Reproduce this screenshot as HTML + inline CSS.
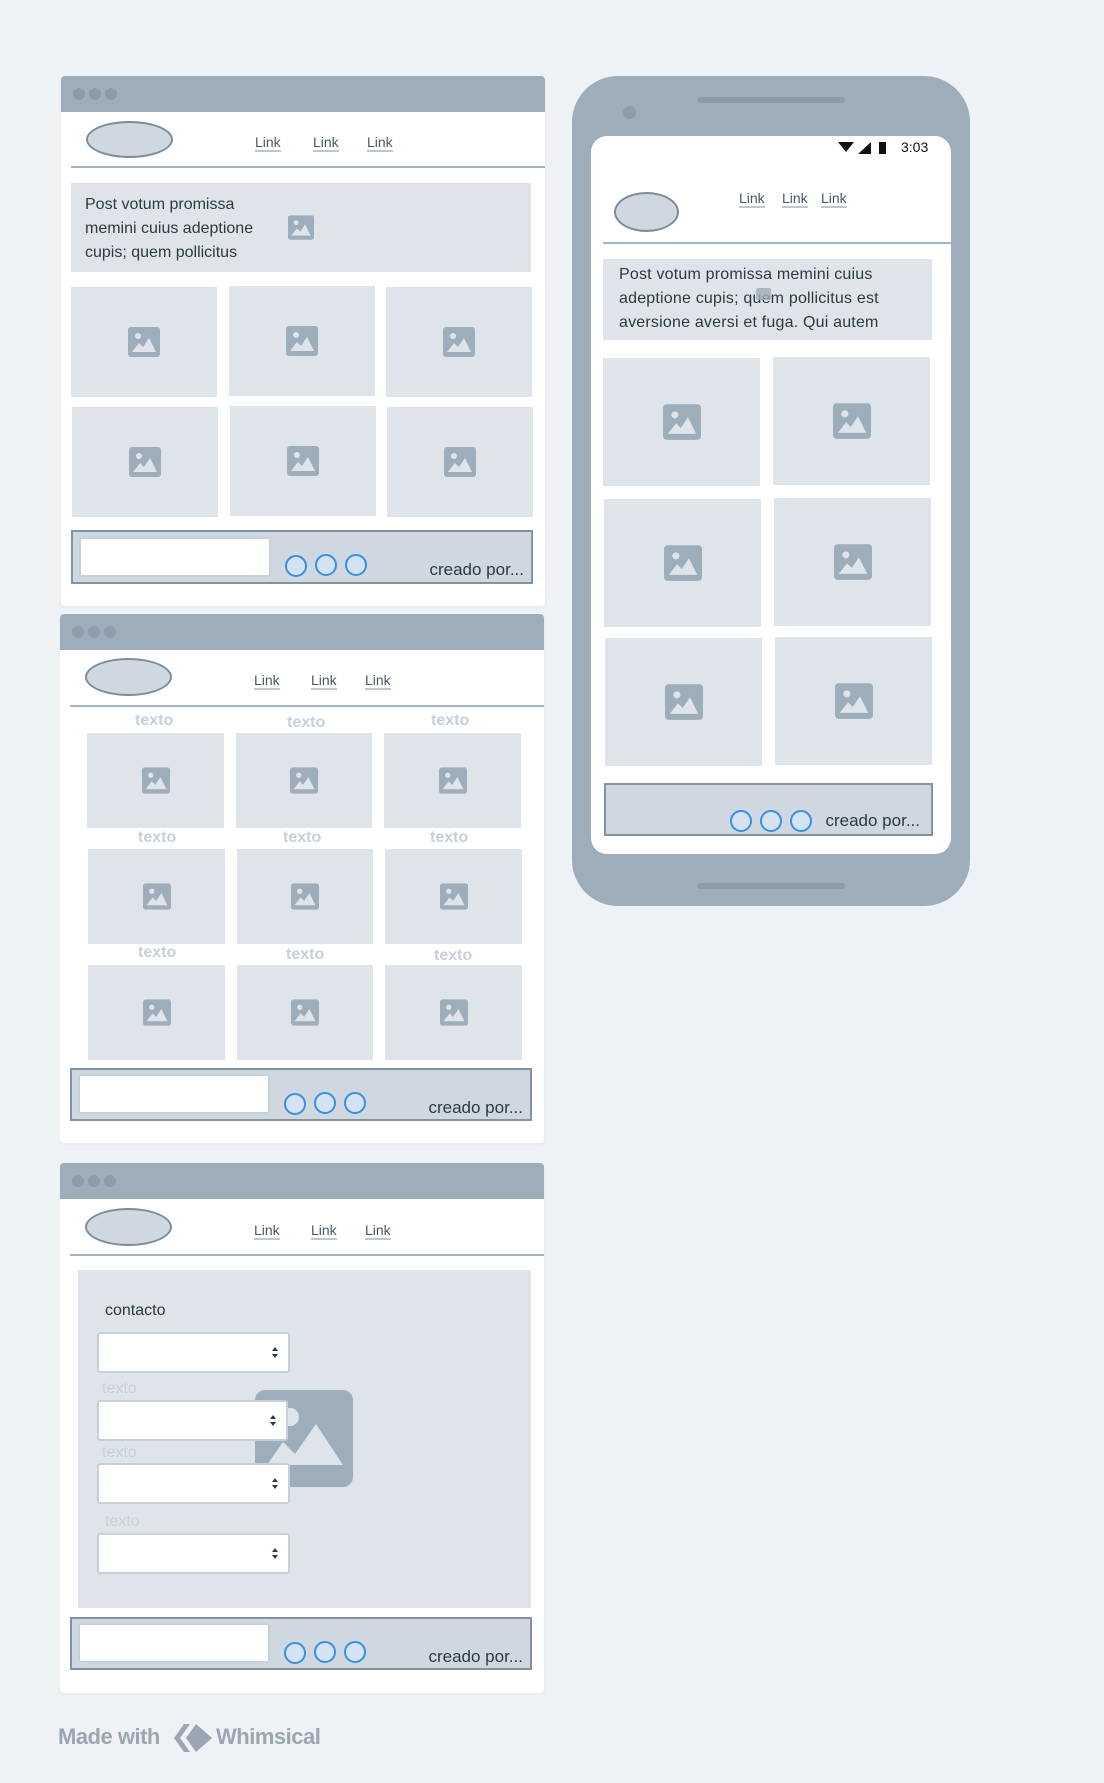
<!DOCTYPE html>
<html><head><meta charset="utf-8"><style>
*{margin:0;padding:0;box-sizing:border-box}
body{width:1104px;height:1783px;background:#eff2f5;position:relative;overflow:hidden;font-family:"Liberation Sans","DejaVu Sans",sans-serif;color:#2c3945}
.a{position:absolute}
.win{position:absolute;background:#fff;border-radius:4px;overflow:hidden;box-shadow:0 1px 3px rgba(0,0,0,.05)}
.tb{position:absolute;left:0;top:0;right:0;height:36px;background:#9eadba}
.dot{position:absolute;top:12px;width:12px;height:12px;border-radius:50%;background:#8d9cab}
.logo{position:absolute;border:2px solid #7d8c9a;background:#cfd8e0;border-radius:50%}
.lk{position:absolute;font-size:14px;color:#4a5866;border-bottom:2px solid #bcc7d2;line-height:16px}
.hl{position:absolute;height:2px;background:#a6b3c0}
.cell{position:absolute;background:#dfe4eb;display:flex;align-items:center;justify-content:center}
.ft{position:absolute;background:#cfd8e0;border:2px solid #8593a1}
.inp{position:absolute;background:#fff;border:2px solid #c6d0d9;border-radius:3px}
.c{position:absolute;width:22px;height:22px;border-radius:50%;border:2px solid #3b8fe0;background:#d3e3f4}
.cp{position:absolute;font-size:17px;color:#2c3945;white-space:nowrap}
.tx{position:absolute;font-size:16px;font-weight:bold;color:#c6d0da}
.sel{position:absolute;width:193px;height:41px;background:#fff;border:2px solid #c6d0d9;border-radius:3px}
.sel:after{content:"";position:absolute;right:10px;top:13px;width:0;height:0;border-left:3px solid transparent;border-right:3px solid transparent;border-bottom:4px solid #2c3945}
.sel:before{content:"";position:absolute;right:10px;top:20px;width:0;height:0;border-left:3px solid transparent;border-right:3px solid transparent;border-top:4px solid #2c3945}
</style></head><body>
<svg width="0" height="0" style="position:absolute"><defs>
<symbol id="im" viewBox="0 0 32 30"><rect width="32" height="30" rx="3" fill="#9eadba"/><circle cx="10" cy="9" r="3" fill="#dfe4eb"/><path d="M4 25 L11 16 L15 20 L21 11 L28 25Z" fill="#dfe4eb"/></symbol>
</defs></svg>

<!-- WINDOW 1 -->
<div class="win" style="left:61px;top:76px;width:484px;height:530px">
<div class="tb"><div class="dot" style="left:12px"></div><div class="dot" style="left:28px"></div><div class="dot" style="left:44px"></div></div>
</div>
<div class="logo" style="left:86px;top:121px;width:87px;height:37px"></div>
<div class="lk" style="left:255px;top:134px">Link</div>
<div class="lk" style="left:313px;top:134px">Link</div>
<div class="lk" style="left:367px;top:134px">Link</div>
<div class="hl" style="left:71px;top:166px;width:474px"></div>
<div class="cell" style="left:71px;top:183px;width:460px;height:89px;display:block">
<div class="a" style="left:14px;top:10px;font-size:16px;line-height:24px;color:#2c3945">Post votum promissa<br>memini cuius adeptione<br>cupis; quem pollicitus</div>
<svg class="a" style="left:217px;top:32px" width="26" height="25"><use href="#im"/></svg></div>
<div class="cell" style="left:71px;top:287px;width:146px;height:110px"><svg width="32" height="30"><use href="#im"/></svg></div>
<div class="cell" style="left:229px;top:286px;width:146px;height:110px"><svg width="32" height="30"><use href="#im"/></svg></div>
<div class="cell" style="left:386px;top:287px;width:146px;height:110px"><svg width="32" height="30"><use href="#im"/></svg></div>
<div class="cell" style="left:72px;top:407px;width:146px;height:110px"><svg width="32" height="30"><use href="#im"/></svg></div>
<div class="cell" style="left:230px;top:406px;width:146px;height:110px"><svg width="32" height="30"><use href="#im"/></svg></div>
<div class="cell" style="left:387px;top:407px;width:146px;height:110px"><svg width="32" height="30"><use href="#im"/></svg></div>
<div class="ft" style="left:71px;top:530px;width:462px;height:54px"></div>
<div class="inp" style="left:79px;top:537px;width:192px;height:40px"></div>
<div class="c" style="left:285px;top:555px"></div><div class="c" style="left:315px;top:554px"></div><div class="c" style="left:345px;top:554px"></div>
<div class="cp" style="right:580px;top:560px">creado por...</div>

<!-- WINDOW 2 -->
<div class="win" style="left:60px;top:614px;width:484px;height:529px">
<div class="tb"><div class="dot" style="left:12px"></div><div class="dot" style="left:28px"></div><div class="dot" style="left:44px"></div></div>
</div>
<div class="logo" style="left:85px;top:658px;width:87px;height:38px"></div>
<div class="lk" style="left:254px;top:672px">Link</div>
<div class="lk" style="left:311px;top:672px">Link</div>
<div class="lk" style="left:365px;top:672px">Link</div>
<div class="hl" style="left:70px;top:705px;width:474px"></div>
<div class="tx" style="left:135px;top:712px">texto</div><div class="tx" style="left:287px;top:714px">texto</div><div class="tx" style="left:431px;top:712px">texto</div>
<div class="tx" style="left:138px;top:829px">texto</div><div class="tx" style="left:283px;top:829px">texto</div><div class="tx" style="left:430px;top:829px">texto</div>
<div class="tx" style="left:138px;top:944px">texto</div><div class="tx" style="left:286px;top:946px">texto</div><div class="tx" style="left:434px;top:947px">texto</div>
<div class="cell" style="left:87px;top:733px;width:137px;height:95px"><svg width="28" height="27"><use href="#im"/></svg></div>
<div class="cell" style="left:236px;top:733px;width:136px;height:95px"><svg width="28" height="27"><use href="#im"/></svg></div>
<div class="cell" style="left:384px;top:733px;width:137px;height:95px"><svg width="28" height="27"><use href="#im"/></svg></div>
<div class="cell" style="left:88px;top:849px;width:137px;height:95px"><svg width="28" height="27"><use href="#im"/></svg></div>
<div class="cell" style="left:237px;top:849px;width:136px;height:95px"><svg width="28" height="27"><use href="#im"/></svg></div>
<div class="cell" style="left:385px;top:849px;width:137px;height:95px"><svg width="28" height="27"><use href="#im"/></svg></div>
<div class="cell" style="left:88px;top:965px;width:137px;height:95px"><svg width="28" height="27"><use href="#im"/></svg></div>
<div class="cell" style="left:237px;top:965px;width:136px;height:95px"><svg width="28" height="27"><use href="#im"/></svg></div>
<div class="cell" style="left:385px;top:965px;width:137px;height:95px"><svg width="28" height="27"><use href="#im"/></svg></div>
<div class="ft" style="left:70px;top:1068px;width:462px;height:53px"></div>
<div class="inp" style="left:78px;top:1074px;width:192px;height:40px"></div>
<div class="c" style="left:284px;top:1093px"></div><div class="c" style="left:314px;top:1092px"></div><div class="c" style="left:344px;top:1092px"></div>
<div class="cp" style="right:581px;top:1098px">creado por...</div>

<!-- WINDOW 3 -->
<div class="win" style="left:60px;top:1163px;width:484px;height:530px">
<div class="tb"><div class="dot" style="left:12px"></div><div class="dot" style="left:28px"></div><div class="dot" style="left:44px"></div></div>
</div>
<div class="logo" style="left:85px;top:1208px;width:87px;height:38px"></div>
<div class="lk" style="left:254px;top:1222px">Link</div>
<div class="lk" style="left:311px;top:1222px">Link</div>
<div class="lk" style="left:365px;top:1222px">Link</div>
<div class="hl" style="left:70px;top:1254px;width:474px"></div>
<div class="cell" style="left:78px;top:1270px;width:453px;height:338px"></div>
<div class="a" style="left:105px;top:1302px;font-size:16px;color:#2c3945">contacto</div>
<svg class="a" style="left:255px;top:1390px" width="98" height="97" viewBox="0 0 98 97"><rect width="98" height="97" rx="10" fill="#9eadba"/><circle cx="35" cy="27" r="9" fill="#dfe4eb"/><path d="M12 75 L28 52 L40 64 L61 34 L88 75Z" fill="#dfe4eb"/></svg>
<div class="sel" style="left:97px;top:1332px"></div>
<div class="tx" style="left:102px;top:1380px;font-weight:normal">texto</div>
<div class="sel" style="left:97px;top:1400px;width:191px"></div>
<div class="tx" style="left:102px;top:1444px;font-weight:normal">texto</div>
<div class="sel" style="left:97px;top:1463px"></div>
<div class="tx" style="left:105px;top:1513px;font-weight:normal">texto</div>
<div class="sel" style="left:97px;top:1533px"></div>
<div class="ft" style="left:70px;top:1617px;width:462px;height:53px"></div>
<div class="inp" style="left:78px;top:1623px;width:192px;height:40px"></div>
<div class="c" style="left:284px;top:1642px"></div><div class="c" style="left:314px;top:1641px"></div><div class="c" style="left:344px;top:1641px"></div>
<div class="cp" style="right:581px;top:1647px">creado por...</div>

<!-- PHONE -->
<div class="a" style="left:572px;top:76px;width:398px;height:830px;background:#9eadba;border-radius:46px"></div>
<div class="a" style="left:697px;top:97px;width:148px;height:6px;background:#8d9cab;border-radius:3px"></div>
<div class="a" style="left:623px;top:106px;width:13px;height:13px;background:#8d9cab;border-radius:50%"></div>
<div class="a" style="left:697px;top:883px;width:148px;height:6px;background:#8d9cab;border-radius:3px"></div>
<div class="a" style="left:591px;top:136px;width:360px;height:718px;background:#fff;border-radius:16px"></div>
<svg class="a" style="left:838px;top:140px" width="50" height="16"><path d="M0 2 L16 2 L8 12Z" fill="#111"/><path d="M20 14 L33 14 L33 2Z" fill="#111"/><rect x="41" y="2" width="7" height="12" fill="#111"/></svg>
<div class="a" style="left:901px;top:139px;font-size:14px;color:#111">3:03</div>
<div class="logo" style="left:614px;top:192px;width:65px;height:40px"></div>
<div class="lk" style="left:739px;top:190px">Link</div>
<div class="lk" style="left:782px;top:190px">Link</div>
<div class="lk" style="left:821px;top:190px">Link</div>
<div class="hl" style="left:603px;top:242px;width:348px"></div>
<div class="cell" style="left:603px;top:259px;width:329px;height:81px;display:block">
<div class="a" style="left:16px;top:4px;font-size:16px;line-height:24px;color:#2c3945;white-space:nowrap;letter-spacing:.2px">Post votum promissa memini cuius<br>adeptione cupis; quem pollicitus est<br>aversione aversi et fuga. Qui autem</div>
<div class="a" style="left:153px;top:29px;width:15px;height:12px;background:#9eadba;opacity:.8;border-radius:2px"></div></div>
<div class="cell" style="left:603px;top:358px;width:157px;height:128px"><svg width="38" height="36"><use href="#im"/></svg></div>
<div class="cell" style="left:773px;top:357px;width:157px;height:128px"><svg width="38" height="36"><use href="#im"/></svg></div>
<div class="cell" style="left:604px;top:499px;width:157px;height:128px"><svg width="38" height="36"><use href="#im"/></svg></div>
<div class="cell" style="left:774px;top:498px;width:157px;height:128px"><svg width="38" height="36"><use href="#im"/></svg></div>
<div class="cell" style="left:605px;top:638px;width:157px;height:128px"><svg width="38" height="36"><use href="#im"/></svg></div>
<div class="cell" style="left:775px;top:637px;width:157px;height:128px"><svg width="38" height="36"><use href="#im"/></svg></div>
<div class="ft" style="left:604px;top:783px;width:329px;height:53px"></div>
<div class="c" style="left:730px;top:810px"></div><div class="c" style="left:760px;top:810px"></div><div class="c" style="left:790px;top:810px"></div>
<div class="cp" style="right:184px;top:811px">creado por...</div>

<!-- Made with Whimsical -->
<div class="a" style="left:58px;top:1724px;font-size:22px;font-weight:bold;color:#9aa6b3;letter-spacing:-.5px">Made with</div>
<svg class="a" style="left:172px;top:1722px" width="42" height="32" viewBox="0 0 42 32"><path d="M12 2 L2 16 L12 30 L18 30 L8 16 L18 2Z" fill="#9aa6b3"/><path d="M24 2 L14 16 L24 30 L40 16Z" fill="#9aa6b3"/></svg>
<div class="a" style="left:216px;top:1724px;font-size:22px;font-weight:bold;color:#9aa6b3;letter-spacing:-.5px">Whimsical</div>
</body></html>
